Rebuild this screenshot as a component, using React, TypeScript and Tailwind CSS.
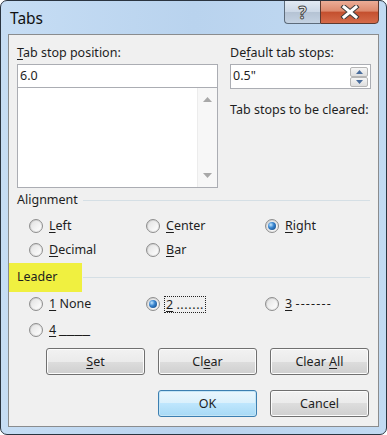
import React from "react";

const font = { fontFamily: '"Noto Sans", "Liberation Sans", sans-serif' };

function Radio({ checked }: { checked?: boolean }) {
  return (
    <span className="relative inline-flex w-[14px] h-[14px] shrink-0 rounded-full border border-[#8e8e8e] bg-[linear-gradient(135deg,#c9c9c9,#f7f7f7)] items-center justify-center">
      <span className="w-[10px] h-[10px] rounded-full bg-[linear-gradient(135deg,#e2e2e2,#ffffff)] flex items-center justify-center">
        {checked && (
          <span className="w-[8px] h-[8px] rounded-full bg-[radial-gradient(circle_at_35%_35%,#c4e8ff_0%,#3a86d0_40%,#0e3f78_100%)]" />
        )}
      </span>
    </span>
  );
}

function RadioItem({ checked, children }: { checked?: boolean; children: React.ReactNode }) {
  return (
    <div className="flex items-center h-[16px] -ml-[1px]">
      <Radio checked={checked} />
      <span className="ml-[6px] leading-[16px] whitespace-nowrap">{children}</span>
    </div>
  );
}

function U({ children }: { children: React.ReactNode }) {
  return <span className="underline underline-offset-2 decoration-1">{children}</span>;
}

function Btn({ children, focused }: { children: React.ReactNode; focused?: boolean }) {
  return (
    <div
      className={
        "w-[99px] h-[27px] rounded-[3px] border flex items-center justify-center " +
        (focused
          ? "border-[#3c7fb1] shadow-[inset_0_0_0_1px_#c4e5f6] bg-[linear-gradient(#eaf6fd_0%,#d9f0fc_50%,#bee6fd_50%,#a7d9f5_100%)]"
          : "border-[#707070] shadow-[inset_0_0_0_1px_#fcfcfc] bg-[linear-gradient(#f2f2f2_0%,#ebebeb_50%,#dddddd_50%,#cfcfcf_100%)]")
      }
    >
      <span className="leading-[16px]">{children}</span>
    </div>
  );
}

function SepLine() {
  return <div className="flex-1 h-px bg-[#d5dfe5] mr-[8px]" />;
}

export default function App() {
  return (
    <div className="w-[387px] h-[435px] bg-white text-[12.5px] text-[#1e1e1e]" style={font}>
      <div className="w-[387px] h-[435px] rounded-[7px] border border-[#2a3440] bg-[linear-gradient(90deg,#c6ddf4,#b9d3ee_50%,#c2daf2)] flex flex-col overflow-hidden">
        {/* title bar */}
        <div className="h-[33px] flex items-start justify-between">
          <div className="pl-[9px] pt-[7px] text-[15.5px] leading-[20px] text-[#111]">Tabs</div>
          <div className="flex mr-[7px] -mt-px">
            <div className="w-[36px] h-[24px] border border-[#5d6b7a] border-r-0 rounded-bl-[4px] bg-[linear-gradient(#e2eaf3_0%,#ccd8e6_48%,#b5c3d4_52%,#c4d2e2_100%)] flex items-center justify-center">
              <span className="text-[17px] font-bold leading-none text-[#f4f4f4] [-webkit-text-stroke:1px_#4a4a4a]">?</span>
            </div>
            <div className="w-[59px] h-[24px] border border-[#5d3a30] rounded-br-[4px] bg-[linear-gradient(#ebad97_0%,#dd8a6e_45%,#c4502f_52%,#d56b4a_100%)] flex items-center justify-center">
              <svg width="20" height="14" viewBox="0 0 20 14">
                <path d="M4 2 L16 12 M16 2 L4 12" stroke="#3c3c3c" strokeWidth="5" strokeLinecap="square" />
                <path d="M4 2 L16 12 M16 2 L4 12" stroke="#ffffff" strokeWidth="3" strokeLinecap="square" />
              </svg>
            </div>
          </div>
        </div>
        {/* client */}
        <div className="mx-[7px] h-[393px] border border-[#8a8c8e] bg-[#f0f0f0] flex flex-col">
          {/* top section */}
          <div className="flex pt-[10px] pl-[8px]">
            <div className="w-[201px] flex flex-col">
              <div className="h-[16px] leading-[16px]">
                <U>T</U>ab stop position:
              </div>
              <div className="mt-[3px] h-[24px] border border-[#abadb3] bg-white flex items-center pl-[2px]">6.0</div>
              <div className="h-[100px] border border-t-0 border-[#abadb3] bg-white flex justify-end">
                <div className="w-[20px] h-full bg-[#f7f7f7] border-l border-[#ececec] flex flex-col items-center justify-between py-[9px]">
                  <svg width="9" height="5" viewBox="0 0 9 5"><path d="M0 5 L4.5 0 L9 5 Z" fill="#a8a8a8" /></svg>
                  <svg width="9" height="5" viewBox="0 0 9 5"><path d="M0 0 L4.5 5 L9 0 Z" fill="#a8a8a8" /></svg>
                </div>
              </div>
            </div>
            <div className="ml-[12px] w-[141px] flex flex-col">
              <div className="h-[16px] leading-[16px]">
                De<U>f</U>ault tab stops:
              </div>
              <div className="mt-[3px] h-[25px] border border-[#abadb3] bg-white flex items-center pl-[2px] justify-between">
                <span>0.5"</span>
                <div className="flex flex-col mr-[2px] gap-0">
                  <div className="w-[18px] h-[10px] border border-[#b5b5b5] rounded-[2px] bg-[linear-gradient(#f6f6f6,#dedede)] flex items-center justify-center">
                    <svg width="7" height="4" viewBox="0 0 7 4"><path d="M0 4 L3.5 0 L7 4 Z" fill="#4a6d9c" /></svg>
                  </div>
                  <div className="w-[18px] h-[10px] border border-[#b5b5b5] rounded-[2px] bg-[linear-gradient(#f6f6f6,#dedede)] flex items-center justify-center">
                    <svg width="7" height="4" viewBox="0 0 7 4"><path d="M0 0 L3.5 4 L7 0 Z" fill="#4a6d9c" /></svg>
                  </div>
                </div>
              </div>
              <div className="mt-[13px] h-[16px] leading-[16px] whitespace-nowrap">Tab stops to be cleared:</div>
            </div>
          </div>
          {/* Alignment */}
          <div className="mt-[4px] h-[16px] flex items-center">
            <span className="pl-[8px] pr-[5px] leading-[16px]">Alignment</span>
            <SepLine />
          </div>
          <div className="mt-[10px] pl-[21px] grid grid-cols-[117px_119px_1fr] gap-y-[8px]">
            <RadioItem><U>L</U>eft</RadioItem>
            <RadioItem><U>C</U>enter</RadioItem>
            <RadioItem checked><U>R</U>ight</RadioItem>
            <RadioItem><U>D</U>ecimal</RadioItem>
            <RadioItem><U>B</U>ar</RadioItem>
          </div>
          {/* Leader */}
          <div className="mt-[5px] h-[29px] flex items-center">
            <div className="w-[73px] h-[29px] bg-[#f0f040] flex items-center pl-[8px]">Leader</div>
            <div className="flex-1 h-px bg-[#d5dfe5] mr-[8px] ml-[1px]" />
          </div>
          <div className="mt-[4px] pl-[21px] grid grid-cols-[117px_119px_1fr] gap-y-[10px]">
            <RadioItem><U>1</U> None</RadioItem>
            <div className="flex items-center h-[16px] -ml-[1px]">
              <Radio checked />
              <span className="ml-[4px] px-[1px] leading-[15px] border border-dotted border-[#222] whitespace-nowrap">
                <U>2</U> <span className="tracking-[0.6px]">.......</span>
              </span>
            </div>
            <RadioItem><U>3</U> <span className="tracking-[1.2px]">-------</span></RadioItem>
            <RadioItem><U>4</U> <span className="inline-block origin-left scale-x-[1.4]">____</span></RadioItem>
          </div>
          {/* buttons */}
          <div className="mt-[10px] pl-[37px] flex gap-[13px]">
            <Btn><U>S</U>et</Btn>
            <Btn>Cl<U>e</U>ar</Btn>
            <Btn>Clear <U>A</U>ll</Btn>
          </div>
          <div className="mt-[15px] pl-[149px] flex gap-[13px]">
            <Btn focused>OK</Btn>
            <Btn>Cancel</Btn>
          </div>
        </div>
      </div>
    </div>
  );
}
